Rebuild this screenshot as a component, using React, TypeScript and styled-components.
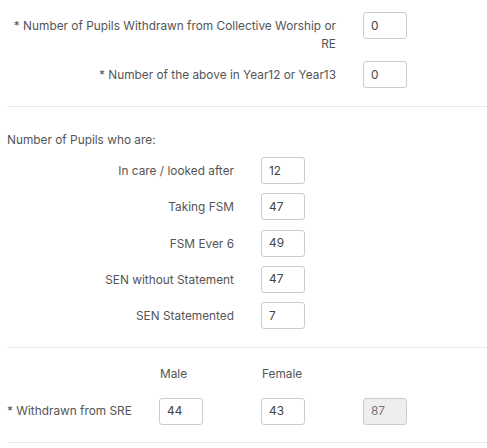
import React from "react";
import styled, { createGlobalStyle } from "styled-components";

const Global = createGlobalStyle`
  html, body { margin: 0; padding: 0; background: #fff; }
  body { font-family: Inter, "Open Sans", sans-serif; font-size: 11.85px; color: #555; }
  * { box-sizing: border-box; }
`;

const Page = styled.div`
  padding: 12px 0 0 7px;
  width: 487px;
`;

const Section = styled.div<{ $pt?: number; $pb?: number }>`
  padding-top: ${(p) => p.$pt ?? 0}px;
  padding-bottom: ${(p) => p.$pb ?? 0}px;
  border-bottom: 1px solid #e8e8e8;
`;

const Row = styled.div<{ $gap?: number }>`
  display: flex;
  align-items: flex-start;
  margin-bottom: ${(p) => p.$gap ?? 0}px;
`;

const Label = styled.label<{ $w: number }>`
  width: ${(p) => p.$w}px;
  flex: none;
  text-align: right;
  line-height: 18px;
  padding-top: 5px;
  margin-right: 27px;
`;

const Input = styled.input<{ $readonly?: boolean }>`
  width: 44px;
  height: 27px;
  padding: 0 7px;
  border: 1px solid #ccc;
  border-radius: 3px;
  font-family: Inter, "Open Sans", sans-serif;
  font-size: 11.85px;
  color: ${(p) => (p.$readonly ? "#777" : "#444")};
  background: ${(p) => (p.$readonly ? "#eee" : "#fff")};
  outline: none;
`;

const Heading = styled.div`
  line-height: 18px;
  margin-top: 24px;
  margin-bottom: 8px;
`;

const Grid = styled.div`
  display: grid;
  grid-template-columns: 152px 102px 102px 44px;
  align-items: center;
`;

const ColHead = styled.div`
  line-height: 18px;
  padding-left: 1px;
`;

const GridLabel = styled.div`
  line-height: 18px;
`;

const HeadRow = styled(Grid)`
  margin-bottom: 15px;
`;

const pupils = [
  ["In care / looked after", "12"],
  ["Taking FSM", "47"],
  ["FSM Ever 6", "49"],
  ["SEN without Statement", "47"],
  ["SEN Statemented", "7"],
];

export default function App() {
  return (
    <Page>
      <Global />
      <Section $pb={18}>
        <Row $gap={8}>
          <Label $w={329}>* Number of Pupils Withdrawn from Collective Worship or RE</Label>
          <Input defaultValue="0" />
        </Row>
        <Row>
          <Label $w={329}>* Number of the above in Year12 or Year13</Label>
          <Input defaultValue="0" />
        </Row>
      </Section>
      <Section $pb={8.5}>
        <Heading>Number of Pupils who are:</Heading>
        {pupils.map(([l, v]) => (
          <Row key={l} $gap={9.3}>
            <Label $w={227}>{l}</Label>
            <Input defaultValue={v} />
          </Row>
        ))}
      </Section>
      <Section $pt={17} $pb={17}>
        <HeadRow>
          <div />
          <ColHead>Male</ColHead>
          <ColHead>Female</ColHead>
          <div />
        </HeadRow>
        <Grid>
          <GridLabel>* Withdrawn from SRE</GridLabel>
          <Input defaultValue="44" />
          <Input defaultValue="43" />
          <Input defaultValue="87" readOnly $readonly />
        </Grid>
      </Section>
    </Page>
  );
}
